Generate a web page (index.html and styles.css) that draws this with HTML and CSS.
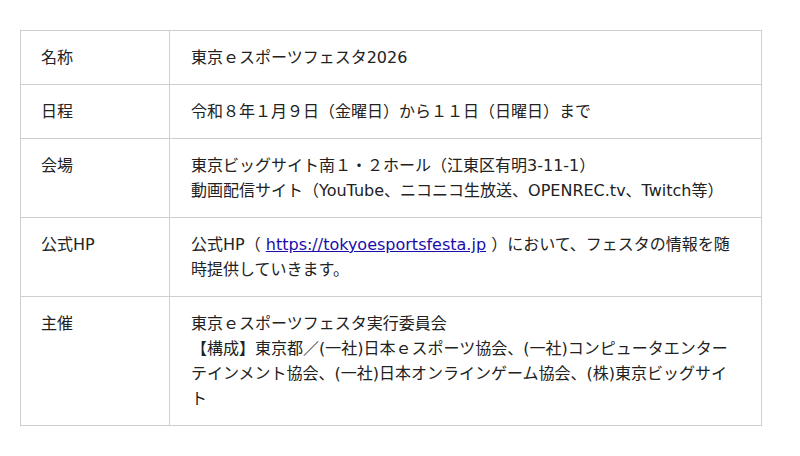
FILE: index.html
```html
<!DOCTYPE html>
<html lang="ja">
<head>
<meta charset="utf-8">
<link rel="stylesheet" href="styles.css">
</head>
<body>
<div class="wrap">
<table class="info">
<tr><th>名称</th><td>東京ｅスポーツフェスタ2026</td></tr>
<tr><th>日程</th><td>令和８年１月９日（金曜日）から１１日（日曜日）まで</td></tr>
<tr><th>会場</th><td>東京ビッグサイト南１・２ホール（江東区有明3-11-1）<br>動画配信サイト（YouTube、ニコニコ生放送、OPENREC.tv、Twitch等）</td></tr>
<tr><th>公式HP</th><td>公式HP（ <a href="#">https://tokyoesportsfesta.jp</a> ）において、フェスタの情報を随時提供していきます。</td></tr>
<tr><th>主催</th><td>東京ｅスポーツフェスタ実行委員会<br>【構成】東京都／(一社)日本ｅスポーツ協会、(一社)コンピュータエンターテインメント協会、(一社)日本オンラインゲーム協会、(株)東京ビッグサイト</td></tr>
</table>
</div>
</body>
</html>
```
FILE: styles.css
```css
html, body {
  margin: 0;
  padding: 0;
  background: #fff;
}
body {
  font-family: "DejaVu Sans", "Noto Sans CJK JP", sans-serif;
  font-size: 16px;
  color: #222;
}
.wrap {
  padding: 30px 38px 0 20px;
}
.info {
  width: 742px;
  border-collapse: collapse;
  border: 1px solid #d6d6d6;
}
.info th, .info td {
  border: 1px solid #cfcfcf;
  text-align: left;
  vertical-align: top;
  font-weight: normal;
  line-height: 25px;
  padding: 14px 20px;
}
.info th {
  width: 108px;
  padding-left: 20px;
}
.info td {
  padding-left: 21px;
}
.info a {
  color: #1a0dab;
  text-decoration: underline;
}
```
